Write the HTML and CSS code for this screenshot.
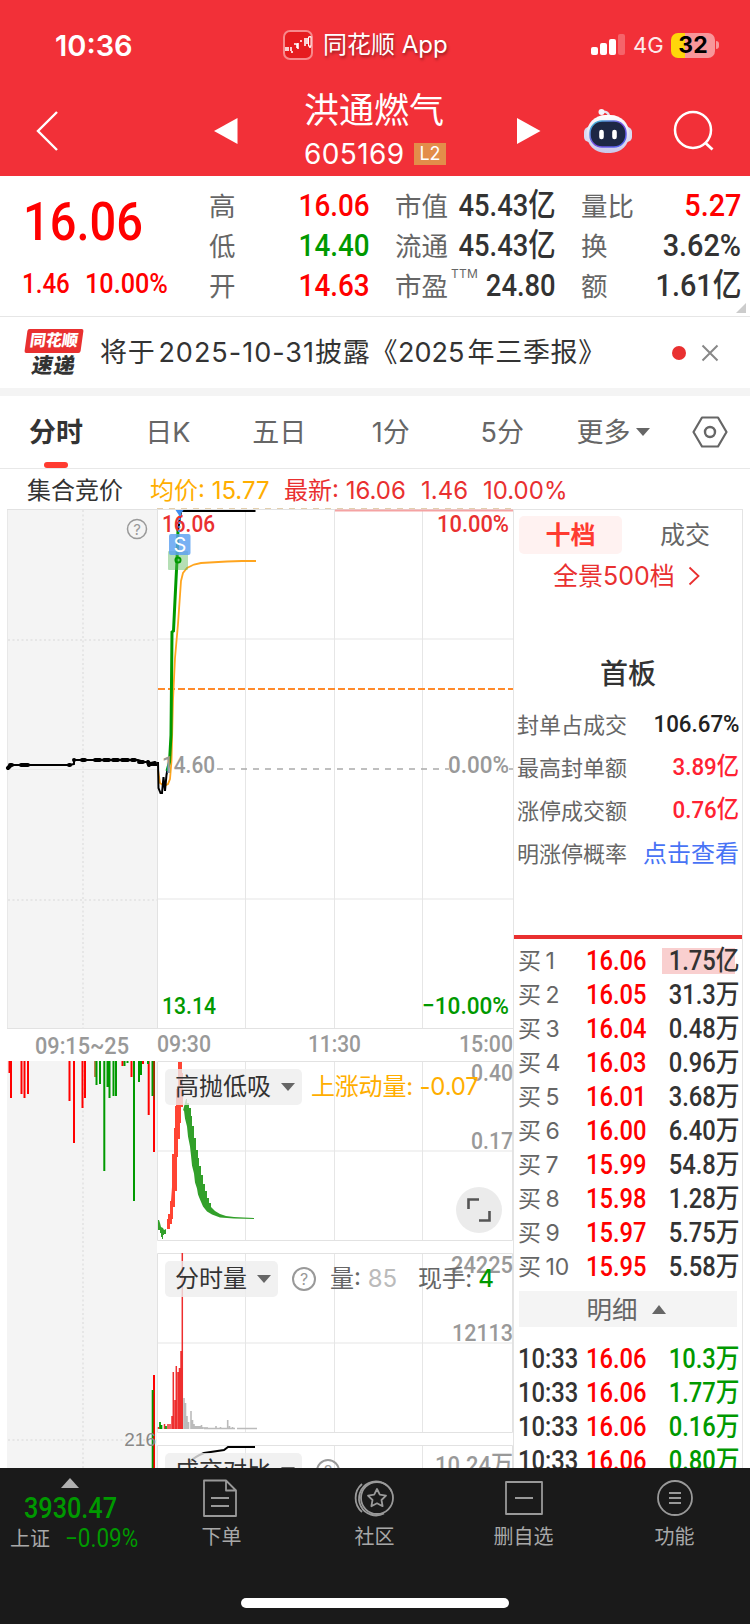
FILE: index.html
```html
<!DOCTYPE html>
<html lang="zh-CN">

<head>
    <meta charset="utf-8">
    <title>洪通燃气 605169</title>
    <link rel="stylesheet" href="styles.css">
</head>

<body>
    <header class="topo">
        <div class="status">
            <span class="hora">10:36</span>
            <div class="app">
                <svg width="30" height="30" viewBox="0 0 30 30">
                    <rect x="1" y="1" width="28" height="28" rx="6" fill="#e61c1f" stroke="#f7898b" stroke-width="2" />
                    <path d="M3 17v4M5 17v4M8 17v4M9 21v2M11 14h3v4M15 13v6M17 11h2M22 8v8M24 8v6M27 6v12" stroke="#fff" stroke-width="1.6" fill="none" />
                    <rect x="25.5" y="7" width="2.5" height="9" fill="#e61c1f" stroke="#fff" stroke-width="1" />
                </svg>
                <span>同花顺 App</span>
            </div>
            <div class="sinal">
                <svg width="34" height="22" viewBox="0 0 34 22">
                    <g fill="#fff">
                        <rect x="0" y="13" width="7" height="8" rx="2" />
                        <rect x="9" y="9" width="7" height="12" rx="2" />
                        <rect x="18" y="5" width="7" height="16" rx="2" />
                        <rect x="27" y="0" width="7" height="21" rx="2" opacity=".25" />
                    </g>
                </svg>
                <span class="rede">4G</span>
                <span class="bateria">32</span>
                <i class="polo"></i>
            </div>
        </div>
        <div class="titulo">
            <svg class="voltar" width="24" height="42" viewBox="0 0 24 42"><path d="M21 2L2 21l19 19" fill="none" stroke="#fff" stroke-width="2.4" /></svg>
            <svg class="anterior" width="24" height="26" viewBox="0 0 24 26"><path d="M0 13L23.500 0v26z" fill="#fff" /></svg>
            <div class="acao">
                <h1>洪通燃气</h1>
                <div class="codigo"><span>605169</span><b>L2</b></div>
            </div>
            <svg class="proxima" width="24" height="26" viewBox="0 0 24 26"><path d="M23.500 13L0 0v26z" fill="#fff" /></svg>
            <svg class="robo" width="50" height="46" viewBox="0 0 50 46">
                <defs>
                    <linearGradient id="casco" x1="0" y1="0" x2="0" y2="1"><stop offset="0" stop-color="#fff" /><stop offset="1" stop-color="#c9c8ea" /></linearGradient>
                    <linearGradient id="aro" x1="0" y1="0" x2="1" y2="1"><stop offset="0" stop-color="#39c6d6" /><stop offset=".5" stop-color="#7a4be0" /><stop offset="1" stop-color="#4b6bf0" /></linearGradient>
                </defs>
                <path d="M18 4c4-1 8 0 8 5" fill="none" stroke="#e4e4f2" stroke-width="2.400" />
                <circle cx="18.500" cy="4" r="3" fill="#f4f4fb" />
                <rect x="1" y="19" width="10" height="15" rx="5" fill="#d9d9f0" />
                <rect x="39" y="19" width="10" height="15" rx="5" fill="#d9d9f0" />
                <rect x="3.500" y="7" width="43" height="38" rx="19" fill="url(#casco)" />
                <rect x="7" y="13" width="36" height="26" rx="12" fill="#1d2744" stroke="url(#aro)" stroke-width="1.500" />
                <path d="M18.500 24v5M31.500 24v5" stroke="#fff" stroke-width="4.600" stroke-linecap="round" />
            </svg>
            <svg class="busca" width="42" height="42" viewBox="0 0 42 42"><circle cx="20" cy="20" r="18" fill="none" stroke="#fff" stroke-width="2.500" /><path d="M32.500 33l7 6.500" stroke="#fff" stroke-width="2.800" /></svg>
        </div>
    </header>

    <section class="cotacao">
        <div class="preco">
            <span class="num grande">16.06</span>
            <div class="variacao"><span class="num">1.46</span><span class="num">10.00%</span></div>
        </div>
        <dl class="dados d1">
            <dt>高</dt><dd class="num sobe">16.06</dd>
            <dt>低</dt><dd class="num desce">14.40</dd>
            <dt>开</dt><dd class="num sobe">14.63</dd>
        </dl>
        <dl class="dados d2">
            <dt>市值</dt><dd class="num">45.43亿</dd>
            <dt>流通</dt><dd class="num">45.43亿</dd>
            <dt>市盈<sup>TTM</sup></dt><dd class="num">24.80</dd>
        </dl>
        <dl class="dados d3">
            <dt>量比</dt><dd class="num sobe">5.27</dd>
            <dt>换</dt><dd class="num">3.62%</dd>
            <dt>额</dt><dd class="num">1.61亿</dd>
        </dl>
        <i class="canto"></i>
    </section>

    <section class="aviso">
        <div class="selo"><b>同花顺</b><strong>速递</strong></div>
        <p>将于<span class="esp"></span><span class="data">2025-10-31</span>披露《<span class="ano">2025</span><span class="esp"></span>年三季报》</p>
        <i class="ponto"></i>
        <svg width="18" height="18" viewBox="0 0 18 18"><path d="M1.500 1.500l15 15M16.500 1.500l-15 15" stroke="#888" stroke-width="2" /></svg>
    </section>

    <nav class="abas">
        <a class="ativa">分时</a>
        <a>日K</a>
        <a>五日</a>
        <a>1分</a>
        <a>5分</a>
        <a class="mais">更多<i class="seta"></i></a>
        <svg width="36" height="32" viewBox="0 0 36 32"><path d="M10 1.500h16L34.500 16 26 30.500H10L1.500 16z" fill="none" stroke="#666" stroke-width="2.200" stroke-linejoin="round" /><circle cx="18" cy="16" r="5" fill="none" stroke="#666" stroke-width="2.400" /></svg>
    </nav>

    <div class="legenda">
        <span>集合竞价</span>
        <span class="media">均价: 15.77</span>
        <span class="ultimo">最新: 16.06</span>
        <span class="ultimo">1.46</span>
        <span class="ultimo">10.00%</span>
    </div>

    <main class="corpo">
        <div class="grafico">
            <svg class="tela" width="513" height="960" viewBox="0 508 513 960">
                <!-- leilao de abertura -->
                <path d="M7 509h150v519H7zM7 1061h150v407H7z" fill="#f4f4f4" />
                <path d="M83 510v518M83 1061v407M8 640h149M8 900h149M8 1440h149" stroke="#e6e6e6" stroke-width="2" stroke-dasharray="2 2.500" fill="none" />
                <path d="M7.500 509v519M7 769.500h150" stroke="#e8e8e8" fill="none" />

                <!-- grade -->
                <path d="M158 639h355M158 899h355M158 1151h355M158 1343h355" stroke="#f2f2f2" stroke-width="2" />
                <path d="M245.500 509v519M334.500 509v519M422.500 509v519M245.500 1061v179M334.500 1061v179M422.500 1061v179M245.500 1253v179M334.500 1253v179M422.500 1253v179M245.500 1445v23M334.500 1445v23M422.500 1445v23" stroke="#e6e6e6" />
                <path d="M7 1028.500h506M7 509.500h506M157.500 509v519M157.500 1061.500h355v179h-355zM157.500 1253.500h355v179h-355zM157.500 1480v-34.500h355v34" stroke="#e2e2e2" fill="none" />
                <path d="M157 508.500h356" stroke="#e3cfae" stroke-width="1" stroke-dasharray="6 6" />
                <path d="M335 510.500h178" stroke="#f5a3a3" stroke-width="2" />
                <path d="M158 689h355" stroke="#ff8a2b" stroke-width="2" stroke-dasharray="7 3" />
                <path d="M217 769h232M509 769h4" stroke="#aaa" stroke-width="1.600" stroke-dasharray="6 6" />

                <!-- linha do leilao -->
                <path d="M8 769l2-4h60l4-1v-4h64l6 2h5l4 3h4" stroke="#000" stroke-width="2" fill="none" />
                <path d="M8 768l2-2M10 765h2M21 765h7M69 765h1M74 760h.1M82 760h3M95 760h5M104 760h5M113 760h5M122 760h6M132 760h3M139 762h4M148 762l1 3M151 764l4-1" stroke="#000" stroke-width="4" stroke-linecap="round" fill="none" />

                <!-- preco e media -->
                <path d="M158 770l2 13 4 3 4-2 2-5 1.500-18 1.500-61 2-42 3-34 3-43 2-8 4-5 7-3.500 7-1.500 26-1.500 15-.5h14" stroke="#ffa51f" stroke-width="1.800" fill="none" />
                <path d="M158 762l.5 26 2 5h1.500l1.500-16 1.500 14 1.500-16 1-6" stroke="#000" stroke-width="2" fill="none" />
                <path d="M167 771L169.500 762 171 735 172 632 173.500 631 175 600 177 560 178 530" stroke="#009900" stroke-width="3" fill="none" />
                <path d="M178 530l3-19h74.500" stroke="#000" stroke-width="2.200" fill="none" />
                <text class="eixo cinza" x="162" y="773" textLength="53" lengthAdjust="spacingAndGlyphs">14.60</text>
                <text class="eixo cinza" x="448" y="773" textLength="61" lengthAdjust="spacingAndGlyphs">0.00%</text>
                <text class="eixo vermelho" x="162" y="532" textLength="53" lengthAdjust="spacingAndGlyphs">16.06</text>
                <text class="eixo vermelho" x="437" y="532" textLength="72" lengthAdjust="spacingAndGlyphs">10.00%</text>
                <path d="M180 514l-1 20" stroke="#3f8ff0" stroke-width="2" stroke-dasharray="2 2" />
                <path d="M175.500 510h8l-4 6z" fill="#3f8ff0" />
                <rect x="168" y="551" width="20" height="19" rx="1" fill="#5cb85c" opacity=".45" />
                <circle cx="178" cy="560" r="2.500" fill="none" stroke="#009900" stroke-width="2" />
                <rect x="169" y="534" width="21.500" height="21" rx="2" fill="#5ba0f0" opacity=".82" />
                <text class="marca" x="180" y="552">S</text>
                <circle cx="137" cy="529" r="9.500" fill="none" stroke="#999" stroke-width="1.500" />
                <text class="duvida" x="137" y="534.500">?</text>

                <text class="eixo verde" x="162" y="1013.500" textLength="54" lengthAdjust="spacingAndGlyphs">13.14</text>
                <text class="eixo verde" x="422" y="1013.500" textLength="87" lengthAdjust="spacingAndGlyphs">−10.00%</text>

                <text class="eixo cinza" x="35" y="1054" textLength="94" lengthAdjust="spacingAndGlyphs">09:15~25</text>
                <text class="eixo cinza" x="157" y="1052" textLength="54" lengthAdjust="spacingAndGlyphs">09:30</text>
                <text class="eixo cinza" x="308" y="1052" textLength="53" lengthAdjust="spacingAndGlyphs">11:30</text>
                <text class="eixo cinza" x="459" y="1052" textLength="54" lengthAdjust="spacingAndGlyphs">15:00</text>

                <!-- volume do leilao -->
                <path d="M9.500 1061v12M11 1061v37M21.500 1061v33M24.500 1061v37M28 1061v33M69.500 1061v40M74 1061v82M82.500 1061v47M85 1061v37M122.500 1061v5M131.500 1061v16M143 1061v3M148.700 1061v54M154 1061v91M154 1375v93" stroke="#ff0000" stroke-width="2" />
                <path d="M95 1061v16" stroke="#b05a1a" stroke-width="1.500" />
                <path d="M96.500 1061v24M100 1061v23M104.300 1061v110M107.500 1061v26M109.500 1061v37M113.500 1061v35M116 1061v35M124.500 1061v5M127.500 1061v2M134 1061v140M139 1061v21M141 1061v14M148 1061v3M152.500 1061v35M152.700 1390v78" stroke="#009900" stroke-width="2" />
                <path d="M154.300 1100v-39M153.500 1468v-75" stroke="#8b3a00" stroke-width="1" />
                <text class="volume" x="156" y="1446">216</text>

                <!-- momento -->
                <path d="M166 1229h1v-10h1v-5h2v-13h1l1-14v-33h2v-26h1v-22h1v-17h2v-27h4v11h1v34h-2v16h-1v16h-2v18h-1v34h-2v16h-2v12h-1v5h-2v5z" fill="#ff4433" />
                <path d="M158 1220h1l1 3 1 4 2 1 1 2 2-1v5h-2v1h-1v4h-1v-2h-1v-4h-1v-3h-2zM186 1099h1v4h2v5h2v8h1v10h2v12h2v12h2v8h1v8h2v9h2v9h2v7h2v7h2v5h2v4l4 4 5 3 6 2 8 1 10 .5 10 .4v1l-20-.5-14-1-8-3-5-3-4-5-3-7-2-5-1-6-2-6-1-9-2-8-1-10-1-9-2-10-1-10-2-8-1-8h-1z" fill="#32a02a" />
                <text class="eixo cinza" x="471" y="1080.500" textLength="42" lengthAdjust="spacingAndGlyphs">0.40</text>
                <text class="eixo cinza" x="471" y="1148.500" textLength="42" lengthAdjust="spacingAndGlyphs">0.17</text>

                <!-- volume -->
                <path d="M158.500 1429v-2M164.500 1429v-5M168 1429v-5M170 1429v-5M172 1429v-13M173.300 1429v-57M175 1429v-29M176.300 1429v-63M178 1429v-57M179.500 1429v-61M181 1429v-78M182.300 1429v-176" stroke="#ee2e2e" stroke-width="1.500" />
                <path d="M160 1429v-7M161.500 1429v-4M166 1429v-3" stroke="#009900" stroke-width="1.700" />
                <path d="M184 1429v-31M185.500 1429v-26M187 1429v-13M188.500 1429v-7M191 1429v-18M192.500 1429v-9M194 1429v-5M195.500 1429v-3M197 1429v-3M198.500 1429v-3M200 1429v-3M201.500 1429v-4M203 1429v-2M205 1429v-2M207 1429v-2M211 1429v-1M213 1429v-1M216 1429v-3M218 1429v-1M220.500 1429v-2M224 1429v-1M226 1429v-1M227.700 1429v-9M229.500 1429v-3M232.500 1429v-2M204 1428.500h31M237 1428.500h20" stroke="#bbb" stroke-width="1.600" fill="none" />
                <text class="eixo cinza" x="451" y="1273" textLength="62" lengthAdjust="spacingAndGlyphs">24225</text>
                <text class="eixo cinza" x="452" y="1341" textLength="61" lengthAdjust="spacingAndGlyphs">12113</text>

                <!-- comparacao -->
                <path d="M190 1462q4-5 14-9l20-3 4-3h27" stroke="#000" stroke-width="2" fill="none" />
                <text class="eixo cinza" x="435" y="1473" textLength="78" lengthAdjust="spacingAndGlyphs">10.24万</text>
            </svg>

            <div class="indicador momento"><span class="pilula">高抛低吸<i class="seta"></i></span><span class="media">上涨动量: -0.07</span></div>
            <div class="indicador tempo"><span class="pilula">分时量<i class="seta"></i></span><i class="ajuda">?</i><span>量: <em>85</em></span><span class="mao">现手: <b>4</b></span></div>
            <div class="indicador compara"><span class="pilula">成交对比<i class="seta"></i></span><i class="ajuda">?</i></div>
            <span class="expandir"><svg width="24" height="24" viewBox="0 0 24 24"><path d="M1.500 11V1.500H12M22.500 13v9.500H12" fill="none" stroke="#555" stroke-width="2.600" /></svg></span>
        </div>

        <aside class="livro">
            <div class="modos"><b>十档</b><span>成交</span></div>
            <div class="panorama">全景500档<svg width="12" height="20" viewBox="0 0 12 20"><path d="M1.500 1.500l9 8.500-9 8.500" fill="none" stroke="#e93030" stroke-width="1.800" /></svg></div>
            <h2>首板</h2>
            <ul class="resumo">
                <li>封单占成交<span class="num">106.67%</span></li>
                <li>最高封单额<span class="num rubro">3.89亿</span></li>
                <li>涨停成交额<span class="num rubro">0.76亿</span></li>
                <li>明涨停概率<a>点击查看</a></li>
            </ul>
            <ul class="ordens">
                <li><span>买 1</span><b class="num">16.06</b><em class="num">1.75亿</em></li>
                <li><span>买 2</span><b class="num">16.05</b><em class="num">31.3万</em></li>
                <li><span>买 3</span><b class="num">16.04</b><em class="num">0.48万</em></li>
                <li><span>买 4</span><b class="num">16.03</b><em class="num">0.96万</em></li>
                <li><span>买 5</span><b class="num">16.01</b><em class="num">3.68万</em></li>
                <li><span>买 6</span><b class="num">16.00</b><em class="num">6.40万</em></li>
                <li><span>买 7</span><b class="num">15.99</b><em class="num">54.8万</em></li>
                <li><span>买 8</span><b class="num">15.98</b><em class="num">1.28万</em></li>
                <li><span>买 9</span><b class="num">15.97</b><em class="num">5.75万</em></li>
                <li><span>买 10</span><b class="num">15.95</b><em class="num">5.58万</em></li>
            </ul>
            <div class="detalhe">明细<i class="cima"></i></div>
            <ul class="ordens negocios">
                <li><span class="num">10:33</span><b class="num">16.06</b><em class="num">10.3万</em></li>
                <li><span class="num">10:33</span><b class="num">16.06</b><em class="num">1.77万</em></li>
                <li><span class="num">10:33</span><b class="num">16.06</b><em class="num">0.16万</em></li>
                <li><span class="num">10:33</span><b class="num">16.06</b><em class="num">0.80万</em></li>
            </ul>
        </aside>
    </main>

    <footer class="rodape">
        <div class="indice">
            <i class="cima"></i>
            <span class="num valor">3930.47</span>
            <div><span>上证</span><span class="num pct">−0.09%</span></div>
        </div>
        <a><svg class="folha" width="40" height="40" viewBox="0 0 40 40"><path d="M4 2.500h22l10 10V38H4zM26 2.500v10h10M11 20h18M11 28h18" /></svg>下单</a>
        <a class="comunidade"><svg width="44" height="40" viewBox="0 0 44 40"><path d="M31 35.500a17 17 0 1 1 7.500-22M9 34A18.500 18.500 0 0 1 9 6" /><path d="M24 11l2.800 5.700 6.200.9-4.500 4.400 1.100 6.200-5.600-2.900-5.600 2.900 1.100-6.200-4.500-4.400 6.200-.9z" /><circle cx="24" cy="20" r="16" /></svg>社区</a>
        <a><svg width="40" height="40" viewBox="0 0 40 40"><path d="M2 4h36v32H2zM11 20h18" /></svg>删自选</a>
        <a><svg width="40" height="40" viewBox="0 0 40 40"><circle cx="20" cy="20" r="17" /><path d="M14 15h12M14 20h12M14 25h12" /></svg>功能</a>
        <i class="barra"></i>
    </footer>
</body>

</html>
```
FILE: styles.css
```css
* {
    box-sizing: border-box;
    margin: 0;
    padding: 0;
}

body {
    width: 750px;
    height: 1624px;
    overflow: hidden;
    background-color: #ffffff;
    color: #333333;
    font-family: Inter, "Noto Sans CJK SC", sans-serif;
    font-size: 24px;
    line-height: 1;
    white-space: nowrap;
}

ul {
    list-style: none;
}

i,
em {
    font-style: normal;
}

svg,
i {
    flex-shrink: 0;
}

/* numeros estreitos */
.num {
    display: inline-block;
    font-family: Roboto, "Noto Sans CJK SC", sans-serif;
    font-weight: 500;
    transform: scaleX(.87);
    transform-origin: right;
}

.sobe {
    color: #ff0000;
}

.desce {
    color: #009900;
}

/* topo */
.topo {
    height: 176px;
    background-color: #f23038;
    color: #ffffff;
}

.status {
    display: grid;
    grid-template-columns: 228px 250px 1fr;
    height: 88px;
    padding: 2px 0 0 55px;
    align-items: center;
}

.hora {
    font-size: 29px;
    font-weight: 600;
}

.app {
    display: flex;
    align-items: center;
    gap: 10px;
    font-size: 24px;
    font-weight: 400;
    text-shadow: 1px 2px 3px rgba(0, 0, 0, .4);
}

.sinal {
    display: flex;
    align-items: center;
    padding-left: 58px;
}

.rede {
    width: 37px;
    margin-left: 8px;
    font-size: 22px;
    opacity: .9;
}

.bateria {
    width: 44px;
    height: 25px;
    margin-left: 1px;
    border-radius: 7px;
    background: linear-gradient(90deg, #ffd60a 32%, #f8969a 32%);
    color: #000000;
    font-size: 23px;
    font-weight: 700;
    line-height: 25px;
    text-align: center;
}

.polo {
    width: 3px;
    height: 8px;
    margin-left: 1px;
    border-radius: 0 3px 3px 0;
    background-color: #f8969a;
}

.titulo {
    display: flex;
    align-items: center;
    height: 86px;
    padding-left: 36px;
}

.anterior {
    margin-left: 154px;
}

.acao {
    width: 146px;
    margin: 0 67px 0 66px;
}

.acao h1 {
    font-size: 35px;
    font-weight: 400;
    line-height: 37px;
}

.codigo {
    display: flex;
    align-items: center;
    gap: 11px;
    margin-top: 9px;
    font-size: 28px;
}

.codigo span {
    width: 99px;
    letter-spacing: .4px;
    line-height: 32px;
}

.codigo b {
    width: 32px;
    height: 22px;
    background-color: #e38d4a;
    font-size: 18px;
    font-weight: 400;
    line-height: 22px;
    text-align: center;
}

.robo {
    margin-left: 42px;
}

.busca {
    margin-left: 40px;
}

/* cotacao */
.cotacao {
    position: relative;
    display: flex;
    height: 141px;
    border-bottom: 1px solid #e6e6e6;
}

.preco {
    width: 209px;
    padding: 18px 0 0 23px;
    color: #ff0000;
}

.preco .num {
    transform-origin: left;
}

.grande {
    height: 55px;
    font-size: 54px;
    line-height: 55px;
}

.variacao {
    display: flex;
    margin-top: 21px;
    font-size: 28px;
}

.variacao .num {
    transform: scaleX(.9);
}

.variacao .num:first-child {
    width: 63px;
    margin-left: -1px;
    transform: scaleX(.86);
}

.dados {
    display: grid;
    grid-template-columns: 45px 1fr;
    grid-auto-rows: 40px;
    align-items: center;
    padding-top: 10px;
    font-size: 26.500px;
}

.dados dt {
    color: #666666;
}

.dados dd {
    margin-top: -3px;
    font-size: 32px;
    text-align: right;
}

.dados dd.num {
    justify-self: end;
}

.d1 {
    width: 161px;
}

.d2 {
    width: 161px;
    margin-left: 25px;
}

.d2 .num {
    transform: scaleX(.855);
}

.d3 {
    width: 160px;
    margin-left: 25px;
}

.d3 .num {
    transform: scaleX(.9);
}

.dados sup {
    display: inline-block;
    margin-left: 3px;
    font-size: 12px;
    letter-spacing: .3px;
    vertical-align: 18px;
    line-height: 0;
}

.canto {
    position: absolute;
    right: 4px;
    bottom: 3px;
    border: 5px solid #cccccc;
    border-top-color: transparent;
    border-left-color: transparent;
}

/* aviso */
.aviso {
    display: flex;
    align-items: center;
    height: 79px;
    padding-left: 24px;
    border-bottom: 8px solid #f4f4f4;
}

.selo {
    display: flex;
    flex-direction: column;
    align-items: center;
    width: 60px;
    margin-right: 16px;
}

.selo b {
    width: 56px;
    height: 24px;
    border-radius: 2px;
    background-color: #e93030;
    color: #ffffff;
    font-size: 16px;
    font-weight: 900;
    line-height: 23px;
    text-align: center;
    transform: skewX(-8deg);
}

.selo strong {
    margin-top: 2px;
    font-size: 21px;
    font-weight: 900;
    line-height: 22px;
    letter-spacing: 1px;
    transform: skewX(-10deg);
}

.aviso p {
    width: 572px;
    font-size: 27px;
    letter-spacing: .7px;
}

.aviso .data {
    letter-spacing: 1px;
}

.aviso .ano {
    letter-spacing: 0;
}

.esp {
    display: inline-block;
    width: 3px;
}

.ponto {
    width: 14px;
    height: 14px;
    margin-right: 15px;
    border-radius: 50%;
    background-color: #e93030;
}

/* abas */
.abas {
    display: grid;
    grid-template-columns: 112px repeat(4, 111.500px) 134px 36px;
    align-items: center;
    justify-items: center;
    height: 73px;
    border-bottom: 1px solid #e8e8e8;
    color: #666666;
    font-size: 27px;
}

.abas a {
    display: flex;
    align-items: center;
    height: 72px;
}

.abas .mais {
    margin-right: 24px;
}

.abas .ativa {
    position: relative;
    color: #333333;
    font-weight: 700;
}

.ativa::after {
    content: "";
    position: absolute;
    bottom: 0;
    left: 15px;
    width: 24px;
    height: 6px;
    border-radius: 3px;
    background-color: #ff3b30;
}

.seta {
    border: 7px solid transparent;
    border-top: 8px solid #666666;
    border-bottom: 0;
}

.mais .seta {
    margin-left: 5px;
}

.legenda {
    display: flex;
    align-items: center;
    height: 39px;
    padding: 4px 0 0 27px;
    font-size: 24px;
}

.legenda span:nth-child(1) {
    width: 123px;
}

.legenda span:nth-child(2) {
    width: 134px;
}

.legenda span:nth-child(3) {
    width: 137px;
}

.legenda span:nth-child(4) {
    width: 62px;
}

.media {
    color: #ffae00;
}

.ultimo {
    color: #e93030;
}

/* grafico */
.corpo {
    display: flex;
    height: 960px;
    overflow: hidden;
}

.grafico {
    position: relative;
    width: 513px;
    height: 960px;
}

.tela {
    display: block;
}

.eixo {
    font-family: Roboto, "Noto Sans CJK SC", sans-serif;
    font-size: 24.500px;
    font-weight: 500;
}

.cinza {
    fill: #999999;
}

.vermelho {
    fill: #e93030;
}

.verde {
    fill: #009900;
}

.marca {
    fill: #ffffff;
    font-size: 20px;
    text-anchor: middle;
}

.duvida {
    fill: #999999;
    font-size: 15px;
    text-anchor: middle;
}

.volume {
    fill: #888888;
    font-family: "Liberation Sans", sans-serif;
    font-size: 19px;
    text-anchor: end;
}

.indicador {
    position: absolute;
    left: 165px;
    display: flex;
    align-items: center;
    height: 36px;
    color: #666666;
    font-size: 24px;
}

.momento {
    top: 561px;
}

.tempo {
    top: 753px;
}

.compara {
    top: 945px;
}

.pilula {
    display: flex;
    align-items: center;
    gap: 10px;
    height: 36px;
    padding: 0 7px 0 10px;
    border-radius: 5px;
    background-color: rgba(238, 238, 238, .8);
    color: #333333;
}

.indicador .media {
    margin-left: 9px;
    letter-spacing: -.2px;
}

.ajuda {
    width: 24px;
    height: 24px;
    margin: 0 14px;
    border: 2px solid #999999;
    border-radius: 50%;
    color: #999999;
    font-size: 16px;
    line-height: 20px;
    text-align: center;
}

.indicador em {
    color: #bbbbbb;
}

.mao {
    margin-left: 21px;
    letter-spacing: -.4px;
}

.mao b {
    color: #009900;
    font-weight: 500;
}

.expandir {
    position: absolute;
    top: 679px;
    left: 456px;
    display: grid;
    place-items: center;
    width: 46px;
    height: 46px;
    border-radius: 50%;
    background-color: #ebebeb;
}

/* livro de ofertas */
.livro {
    width: 230px;
    height: 1000px;
    margin-top: 1px;
    border: 1px solid #e4e4e4;
}

.modos {
    display: flex;
    align-items: center;
    height: 50px;
    padding: 0 32px 0 5px;
    justify-content: space-between;
    color: #666666;
    font-size: 25px;
}

.modos b {
    width: 103px;
    height: 38px;
    border-radius: 5px;
    background-color: #fff2f1;
    color: #ff3b30;
    line-height: 38px;
    text-align: center;
}

.panorama {
    display: flex;
    align-items: center;
    gap: 13px;
    height: 32px;
    padding-left: 39px;
    color: #e93030;
    font-size: 25px;
}

.livro h2 {
    margin-top: 65px;
    font-size: 28px;
    font-weight: 500;
    line-height: 34px;
    text-align: center;
}

.resumo {
    margin-top: 12px;
    height: 236px;
    border-bottom: 4px solid #e93030;
}

.resumo li {
    display: flex;
    align-items: center;
    justify-content: space-between;
    height: 43px;
    padding: 0 3px;
    color: #666666;
    font-size: 22px;
}

.resumo .num {
    color: #222222;
    font-size: 24.500px;
    transform: scaleX(.91);
}

.resumo .rubro {
    color: #ff2233;
}

.resumo a {
    color: #4873f5;
    font-size: 24px;
}

.ordens {
    padding: 5px 3px 0 4px;
}

.ordens li {
    display: grid;
    grid-template-columns: 68px 62px 92px;
    align-items: center;
    height: 34.060px;
    color: #666666;
    font-size: 23px;
    word-spacing: -2px;
}

.ordens .num {
    font-size: 27px;
    transform: scaleX(.88);
}

.ordens b {
    color: #ff0000;
    transform-origin: left;
}

.ordens em {
    justify-self: end;
    color: #333333;
}

.ordens:not(.negocios) li:first-child {
    background: linear-gradient(#f9cfcf, #f9cfcf) 144px 4px / 73px 26px no-repeat;
}

.detalhe {
    display: flex;
    align-items: center;
    justify-content: center;
    gap: 14px;
    width: 218px;
    height: 36px;
    margin: 7px 0 0 5px;
    padding-right: 4px;
    background-color: #f4f4f4;
    color: #666666;
    font-size: 25.500px;
}

.cima {
    border: 7px solid transparent;
    border-bottom: 9px solid #666666;
    border-top: 0;
}

.negocios {
    padding-top: 15px;
}

.ordens span.num {
    color: #333333;
    transform-origin: left;
}

.negocios em {
    color: #009900;
}

/* rodape */
.rodape {
    position: relative;
    display: grid;
    grid-template-columns: 146px repeat(4, 151px);
    height: 156px;
    background-color: #1a1a1a;
    color: #a8a8a8;
    font-size: 20px;
}

.rodape a {
    display: flex;
    flex-direction: column;
    align-items: center;
    gap: 9px;
    padding-top: 10px;
}

.rodape .comunidade {
    padding-left: 4px;
}

.rodape svg {
    fill: none;
    stroke: #999999;
    stroke-width: 1.800;
    stroke-linejoin: round;
}

.rodape .folha {
    margin-right: 4px;
}

.indice {
    display: flex;
    flex-direction: column;
    align-items: center;
    padding-top: 10px;
}

.indice .cima {
    margin-right: 6px;
    border-width: 0 9px 10px;
    border-bottom-color: #b0b0b0;
}

.valor {
    margin: 6px 5px 0 0;
    color: #009900;
    font-size: 29px;
    transform-origin: center;
}

.indice div {
    display: flex;
    align-items: center;
    gap: 15px;
    width: 126px;
    margin-top: 3px;
}

.indice .pct {
    color: #009900;
    font-size: 25px;
    font-weight: 400;
    transform: scaleX(.9);
    transform-origin: left;
}

.barra {
    position: absolute;
    left: 241px;
    bottom: 16px;
    width: 268px;
    height: 10px;
    border-radius: 5px;
    background-color: #ffffff;
}
```
